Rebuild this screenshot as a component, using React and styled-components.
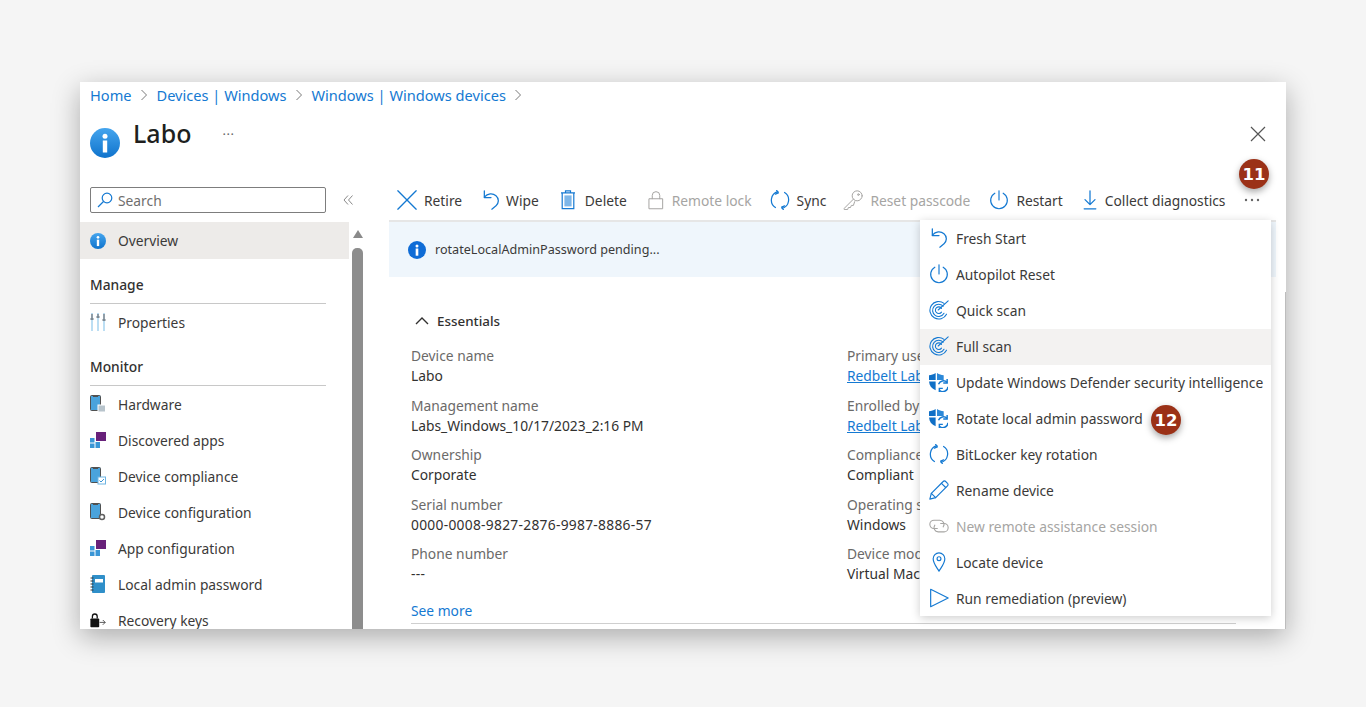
import React from "react";
import styled, { createGlobalStyle } from "styled-components";

const BLUE = "#1479d2";
const GREY = "#a6a5a3";

const GlobalStyle = createGlobalStyle`
  html, body { margin: 0; padding: 0; background: #f5f5f5; }
  body { font-family: "Noto Sans", "Open Sans", Arial, sans-serif; color: #3b3a39; }
`;

const Page = styled.div`
  height: 707px;
  padding: 82px 80px 0;
  box-sizing: border-box;
  overflow: hidden;
`;

const Win = styled.div`
  position: relative;
  width: 1206px;
  height: 547px;
  background: #fff;
  display: flex;
  flex-direction: column;
  box-shadow: 0 8px 26px rgba(0, 0, 0, 0.3);
  &::after {
    content: "";
    position: absolute;
    right: 0;
    top: 210px;
    bottom: 0;
    width: 1px;
    background: #bdbdbd;
  }
`;

const Crumbs = styled.nav`
  height: 28px;
  padding: 0 0 2px 10px;
  box-sizing: border-box;
  display: flex;
  align-items: center;
  gap: 8.5px;
  font-size: 14.6px;
  color: ${BLUE};
  flex-shrink: 0;
`;

const CrumbSep = styled.svg`
  width: 8px;
  height: 12px;
  fill: none;
  stroke: #7a7a7a;
  stroke-width: 1;
`;

const Header = styled.header`
  height: 65px;
  padding: 18px 20px 0 10px;
  box-sizing: border-box;
  display: flex;
  align-items: flex-start;
  flex-shrink: 0;
`;

const Title = styled.h1`
  margin: -13px 0 0 13px;
  font-size: 25px;
  line-height: 36px;
  font-weight: 500;
  color: #201f1e;
`;

const TitleDots = styled.span`
  margin: -8px 0 0 31px;
  font-size: 13px;
  line-height: 20px;
  letter-spacing: 0.5px;
  color: #666;
`;

const CloseBtn = styled.button`
  margin: -2px 0 0 auto;
  padding: 0;
  width: 16px;
  height: 16px;
  border: 0;
  background: none;
  display: flex;
`;

const Body = styled.div`
  flex: 1;
  min-height: 0;
  display: flex;
`;

const Sidebar = styled.aside`
  width: 283px;
  flex-shrink: 0;
  display: flex;
  overflow: hidden;
  position: relative;
`;

const SideCol = styled.div`
  width: 269px;
  flex-shrink: 0;
  padding-top: 12px;
`;

const SearchRow = styled.div`
  display: flex;
  align-items: center;
  padding-left: 10px;
  width: 283px;
`;

const SearchBox = styled.div`
  width: 236px;
  height: 26px;
  box-sizing: border-box;
  border: 1px solid #7d7d7d;
  border-radius: 2px;
  padding-left: 6px;
  display: flex;
  align-items: center;
  gap: 5px;
  font-size: 13.8px;
  color: #6f6e6d;
`;

const Collapse = styled.svg`
  width: 10px;
  height: 10px;
  margin-left: 17px;
  fill: none;
  stroke: #8a8a8a;
  stroke-width: 1;
`;

const NavRow = styled.div`
  height: ${(p) => (p.$active ? 37 : 36)}px;
  margin-top: ${(p) => (p.$active ? 9 : 0)}px;
  padding: 0 0 ${(p) => (p.$active ? 0 : 2)}px 10px;
  box-sizing: border-box;
  display: flex;
  align-items: center;
  gap: 12px;
  font-size: 13.8px;
  white-space: nowrap;
  background: ${(p) => (p.$active ? "#edebe9" : "transparent")};
`;

const NavIcon = styled.span`
  width: 16px;
  height: 18px;
  display: flex;
  align-items: center;
  flex-shrink: 0;
`;

const SectionHead = styled.div`
  height: 45px;
  width: 236px;
  margin: 0 0 1px 10px;
  box-sizing: border-box;
  padding-top: 15px;
  border-bottom: 1px solid #c8c8c8;
  font-size: 13.8px;
  line-height: 22px;
  font-weight: 500;
  color: #323130;
`;

const ScrollTrack = styled.div`
  width: 11px;
  margin-left: 3px;
  padding-top: 55px;
  display: flex;
  flex-direction: column;
  align-items: center;
  gap: 10px;
`;

const ScrollUp = styled.div`
  width: 0;
  height: 0;
  border-left: 5px solid transparent;
  border-right: 5px solid transparent;
  border-bottom: 8px solid #8a8a8a;
`;

const ScrollThumb = styled.div`
  width: 11px;
  flex: 1;
  background: #8d8d8d;
  border-radius: 5px 5px 0 0;
`;

const Main = styled.main`
  position: relative;
  flex: 1;
  min-width: 0;
  overflow: hidden;
`;

const Toolbar = styled.div`
  height: 45px;
  padding: 5px 0 0 34px;
  box-sizing: border-box;
  display: flex;
  align-items: center;
  gap: 18px;
`;

const ToolBtn = styled.div`
  display: flex;
  align-items: center;
  gap: ${(p) => p.$gap || 8}px;
  margin-left: ${(p) => p.$nudge || 0}px;
  font-size: 13.8px;
  white-space: nowrap;
  color: ${(p) => (p.$off ? GREY : "#3b3a39")};
`;

const MoreDots = styled.svg`
  width: 16px;
  height: 4px;
  margin-left: 1px;
  fill: #666;
`;

const Banner = styled.div`
  margin-left: 26px;
  width: 887px;
  height: 57px;
  box-sizing: border-box;
  background: #eff6fc;
  border-top: 2px solid #e6e6e6;
  padding-left: 19px;
  display: flex;
  align-items: center;
  gap: 9px;
  font-size: 12.6px;
`;

const Essentials = styled.section`
  margin-left: 48px;
  width: 825px;
`;

const EssHead = styled.div`
  height: 69px;
  padding: 18px 0 0 4px;
  box-sizing: border-box;
  display: flex;
  align-items: center;
  gap: 8px;
  font-size: 13.4px;
  font-weight: 500;
  color: #323130;
`;

const FieldGrid = styled.div`
  display: grid;
  grid-template-columns: 436px 1fr;
  grid-auto-rows: 49.5px;
`;

const Field = styled.div`
  font-size: 13.8px;
  line-height: 20px;
  white-space: nowrap;
`;

const FieldLabel = styled.div`
  color: #6b6a69;
`;

const FieldValue = styled.div`
  color: #323130;
  letter-spacing: ${(p) => (p.$wide ? "0.28px" : "normal")};
`;

const UserLink = styled.a`
  color: ${BLUE};
  text-decoration: underline;
`;

const SeeMore = styled.a`
  display: block;
  margin-top: 7px;
  font-size: 13.8px;
  line-height: 20px;
  color: ${BLUE};
`;

const EndRule = styled.div`
  margin-top: 2px;
  height: 1px;
  background: #cfcfcf;
`;

const Menu = styled.div`
  position: absolute;
  left: 557px;
  top: 45px;
  width: 351px;
  height: 396px;
  padding-top: 1px;
  box-sizing: border-box;
  background: #fff;
  box-shadow: 0 2px 9px rgba(0, 0, 0, 0.2);
`;

const MenuRow = styled.div`
  height: 36px;
  padding: 0 0 2px 9px;
  box-sizing: border-box;
  display: flex;
  align-items: center;
  gap: 7px;
  font-size: 13.8px;
  white-space: nowrap;
  color: ${(p) => (p.$off ? GREY : "#3b3a39")};
  background: ${(p) => (p.$hover ? "#f3f2f1" : "transparent")};
`;

const MenuIcon = styled.span`
  width: 20px;
  height: 20px;
  display: flex;
  align-items: center;
  flex-shrink: 0;
`;

const Badge = styled.div`
  position: absolute;
  left: ${(p) => p.$x}px;
  top: ${(p) => p.$y}px;
  width: 30px;
  height: 30px;
  border-radius: 50%;
  background: #9b3117;
  color: #fff;
  font-family: "DejaVu Sans", sans-serif;
  font-weight: 700;
  font-size: 16.5px;
  display: flex;
  align-items: center;
  justify-content: center;
  box-shadow: 0 3px 7px rgba(0, 0, 0, 0.35);
`;

const Glyph = ({ size = 20, color = BLUE, sw = 1.4, children }) => (
  <svg width={size} height={size} viewBox="0 0 24 24" fill="none" stroke={color} strokeWidth={sw} strokeLinecap="round" strokeLinejoin="round">
    {children}
  </svg>
);

const InfoBall = ({ size, id, flat }) => (
  <svg width={size} height={size} viewBox="0 0 30 30">
    <defs>
      <linearGradient id={id} x1="0" y1="0" x2="0" y2="1">
        <stop offset="0" stopColor={flat ? "#0f6cd6" : "#45a5ee"} />
        <stop offset="1" stopColor={flat ? "#0f6cd6" : "#0f73cc"} />
      </linearGradient>
    </defs>
    <circle cx="15" cy="15" r="15" fill={`url(#${id})`} />
    <circle cx="15" cy="8.2" r="2.5" fill="#fff" />
    <rect x="12.8" y="12.5" width="4.4" height="12" fill="#fff" />
  </svg>
);

const Retire = () => <Glyph sw={1.6}><path d="M1 1l22 22M23 1L1 23" /></Glyph>;
const Undo = () => (
  <Glyph sw={1.5}>
    <path d="M4 1v8h8" />
    <path d="M4 8.500C8 4 14 3.500 18 7c4 3.600 3.500 8.500 0 12l-5 4" />
  </Glyph>
);
const Trash = () => (
  <svg width="18" height="20" viewBox="0 0 18 20" fill="none" stroke={BLUE} strokeWidth="1.2">
    <path d="M6.500 2.500V.8h5v1.700M2 2.800h14" />
    <path d="M3.200 3v15.600h11.600V3" />
    <rect x="5.400" y="5.400" width="7.200" height="11" fill="#7db6e8" stroke="none" />
  </svg>
);
const Lock = () => (
  <Glyph color={GREY} sw={1.2}>
    <rect x="4" y="10.500" width="16" height="12" />
    <path d="M7.500 10.500V6.500a4.500 4.500 0 0 1 9 0v4" />
  </Glyph>
);
const Sync = () => (
  <Glyph sw={1.5}>
    <path d="M9.500 2A10.500 10.500 0 0 0 6.500 21" />
    <path d="M14.500 22A10.500 10.500 0 0 0 17.500 3" />
    <path d="M8 0.500l2 3-3.500 1.500M16 23.500l-2-3 3.500-1.500" />
  </Glyph>
);
const KeyIcon = () => (
  <Glyph color={GREY} sw={1.2}>
    <circle cx="17" cy="7" r="6" />
    <circle cx="18.500" cy="5.500" r="1" />
    <path d="M12.500 11L1.500 22v1.500h4l1-2.500h2.500l1-2.500h2.500l1.500-4.500" />
  </Glyph>
);
const Power = () => (
  <Glyph sw={1.4}>
    <path d="M12 1v11" />
    <path d="M7 3.800a10 10 0 1 0 10 0" />
  </Glyph>
);
const Download = () => (
  <Glyph sw={1.5}>
    <path d="M12 1v16M6 11.500l6 6 6-6M5 22.500h14" />
  </Glyph>
);
const Scan = () => (
  <Glyph sw={1.3}>
    <path d="M18 4A10.500 10.500 0 1 0 21 17" />
    <path d="M17 7.500A7.300 7.300 0 1 0 18 16" />
    <path d="M15 10A4 4 0 1 0 15 14.500" />
    <path d="M11 12L23 1" />
  </Glyph>
);
const Shield = () => (
  <svg width="19" height="19" viewBox="1 1 22 22">
    <path d="M1 3.500C4 3.500 6 2.500 8.700 1v8.200H1z" fill="#0f6fc6" />
    <path d="M10.300 1C13 2.500 15 3.500 18 3.500v5.700h-7.700z" fill="#2b88d8" />
    <path d="M1 10.800h7.700v10.200C4 19 1.500 16 1 10.800z" fill="#0f6fc6" />
    <path d="M12 14a6 6 0 0 1 10-2M23 17a6 6 0 0 1-10 4" fill="none" stroke={BLUE} strokeWidth="1.700" />
    <path d="M22 8v4.500h-4.500" fill="none" stroke={BLUE} strokeWidth="1.700" />
    <path d="M13 23v-4.200h4" fill="none" stroke={BLUE} strokeWidth="1.700" />
  </svg>
);
const Pencil = () => (
  <Glyph sw={1.4}>
    <path d="M1 23l1.800-7L17 1.800a2 2 0 0 1 3 0l2.200 2.200a2 2 0 0 1 0 3L8 21.200z" />
    <path d="M2.800 16L8 21.200M15 4l5 5" />
  </Glyph>
);
const Chain = () => (
  <Glyph color={GREY} sw={1.3}>
    <path d="M10 15H6a5 5 0 0 1 0-10h7a5 5 0 0 1 4 8" />
    <path d="M14 9h4a5 5 0 0 1 0 10h-7a5 5 0 0 1-4-8" />
  </Glyph>
);
const Pin = () => (
  <Glyph sw={1.4}>
    <path d="M12 23C8 16.500 5 13 5 8a7 7 0 0 1 14 0c0 5-3 8.500-7 15z" />
    <circle cx="12" cy="8" r="2.300" />
  </Glyph>
);
const Play = () => <Glyph sw={1.4}><path d="M2 1.500L23 12 2 22.500z" /></Glyph>;

const SlidersIcon = () => (
  <svg width="16" height="18" viewBox="0 0 16 18" fill="none" strokeWidth="1.800">
    <path d="M2 0v18M8 0v18M14 0v18" stroke="#b5dbf2" />
    <path d="M2 1v4M8 1v2M14 1v5" stroke="#8c97a0" />
    <path d="M0.500 6h3M6.500 4h3M12.500 7h3" stroke="#7d8993" />
  </svg>
);
const PhoneIcon = ({ badge }) => (
  <svg width="16" height="18" viewBox="0 0 16 18">
    <rect x="0.500" y="0.500" width="10" height="15" rx="1" fill="#4aa3dc" stroke="#505050" />
    <rect x="3" y="0" width="5" height="2" fill="#505050" />
    {badge === "chip" && <rect x="8" y="10" width="7.500" height="7" fill="#b8c4cc" stroke="#fff" />}
    {badge === "check" && (
      <g>
        <rect x="8" y="10" width="7.500" height="7" fill="#fff" stroke="#6fb5e3" />
        <path d="M9.500 13.500l1.500 1.500 3-3" fill="none" stroke="#3a96d6" />
      </g>
    )}
    {badge === "gear" && <circle cx="12" cy="14" r="2.500" fill="#fff" stroke="#606060" strokeWidth="1.500" />}
  </svg>
);
const AppsIcon = () => (
  <svg width="16" height="16" viewBox="0 0 16 16">
    <rect x="6" y="0" width="10" height="9" fill="#68217a" />
    <rect x="0" y="6" width="4.500" height="4.500" fill="#3a96d6" />
    <rect x="0" y="11.500" width="4.500" height="4.500" fill="#3a96d6" />
    <rect x="5.500" y="10" width="4.500" height="6" fill="#3a96d6" />
  </svg>
);
const BookIcon = () => (
  <svg width="16" height="18" viewBox="0 0 16 18">
    <rect x="2" y="0" width="13" height="18" rx="1" fill="#2f8fc9" />
    <rect x="5" y="4" width="8" height="3.500" fill="#fff" />
    <path d="M0.500 3h3M0.500 6h3M0.500 9h3M0.500 12h3M0.500 15h3" stroke="#333" />
  </svg>
);
const KeysIcon = () => (
  <svg width="19" height="18" viewBox="0 0 20 18">
    <rect x="0.500" y="7" width="11" height="11" rx="1" fill="#111" />
    <path d="M3 7V4.500a3 3 0 0 1 6 0V7" fill="none" stroke="#111" strokeWidth="1.600" />
    <path d="M12 12h7M16 9l3 3-3 3" fill="none" stroke="#333" />
  </svg>
);

const NAV = [
  { head: "Manage" },
  { label: "Properties", icon: <SlidersIcon /> },
  { head: "Monitor" },
  { label: "Hardware", icon: <PhoneIcon badge="chip" /> },
  { label: "Discovered apps", icon: <AppsIcon /> },
  { label: "Device compliance", icon: <PhoneIcon badge="check" /> },
  { label: "Device configuration", icon: <PhoneIcon badge="gear" /> },
  { label: "App configuration", icon: <AppsIcon /> },
  { label: "Local admin password", icon: <BookIcon /> },
  { label: "Recovery keys", icon: <KeysIcon /> },
];

const TOOLS = [
  { label: "Retire", icon: <Retire />, gap: 7 },
  { label: "Wipe", icon: <Undo />, gap: 5, nudge: 1 },
  { label: "Delete", icon: <Trash />, nudge: 2 },
  { label: "Remote lock", icon: <Lock />, gap: 6, off: true, nudge: 1 },
  { label: "Sync", icon: <Sync />, gap: 7 },
  { label: "Reset passcode", icon: <KeyIcon />, gap: 7, off: true, nudge: -1 },
  { label: "Restart", icon: <Power />, gap: 7, nudge: 1 },
  { label: "Collect diagnostics", icon: <Download />, gap: 5, nudge: -1 },
];

const MENU = [
  { label: "Fresh Start", icon: <Undo /> },
  { label: "Autopilot Reset", icon: <Power /> },
  { label: "Quick scan", icon: <Scan /> },
  { label: "Full scan", icon: <Scan />, hover: true },
  { label: "Update Windows Defender security intelligence", icon: <Shield /> },
  { label: "Rotate local admin password", icon: <Shield /> },
  { label: "BitLocker key rotation", icon: <Sync /> },
  { label: "Rename device", icon: <Pencil /> },
  { label: "New remote assistance session", icon: <Chain />, off: true },
  { label: "Locate device", icon: <Pin /> },
  { label: "Run remediation (preview)", icon: <Play /> },
];

const FIELDS = [
  { a: "Device name", b: "Labo", c: "Primary user", d: "Redbelt Labs", link: true },
  { a: "Management name", b: "Labs_Windows_10/17/2023_2:16 PM", c: "Enrolled by", d: "Redbelt Labs", link: true },
  { a: "Ownership", b: "Corporate", c: "Compliance", d: "Compliant" },
  { a: "Serial number", b: "0000-0008-9827-2876-9987-8886-57", c: "Operating system", d: "Windows", wide: true },
  { a: "Phone number", b: "---", c: "Device model", d: "Virtual Machine", wide: true },
];

const Sep = () => (
  <CrumbSep viewBox="0 0 8 12"><path d="M1.500 1l5 5-5 5" /></CrumbSep>
);

export default function App() {
  return (
    <Page>
      <GlobalStyle />
      <Win>
        <Crumbs>
          <span>Home</span><Sep />
          <span>Devices | Windows</span><Sep />
          <span>Windows | Windows devices</span><Sep />
        </Crumbs>
        <Header>
          <InfoBall size={30} id="ball-big" />
          <Title>Labo</Title>
          <TitleDots>...</TitleDots>
          <CloseBtn aria-label="Close">
            <svg width="16" height="16" viewBox="0 0 16 16" stroke="#555" strokeWidth="1.200">
              <path d="M1 1l14 14M15 1L1 15" />
            </svg>
          </CloseBtn>
        </Header>
        <Body>
          <Sidebar>
            <SideCol>
              <SearchRow>
                <SearchBox>
                  <svg width="16" height="16" viewBox="0 0 16 16" fill="none" stroke={BLUE} strokeWidth="1.200">
                    <circle cx="10" cy="6" r="4.800" />
                    <path d="M6.500 9.500L1 15" />
                  </svg>
                  Search
                </SearchBox>
                <Collapse viewBox="0 0 10 10"><path d="M5 0.500L1 5l4 4.500M9.500 0.500L5.500 5l4 4.500" /></Collapse>
              </SearchRow>
              <NavRow $active>
                <NavIcon><InfoBall size={16} id="ball-nav" /></NavIcon>
                Overview
              </NavRow>
              {NAV.map((n) =>
                n.head ? (
                  <SectionHead key={n.head}>{n.head}</SectionHead>
                ) : (
                  <NavRow key={n.label}>
                    <NavIcon>{n.icon}</NavIcon>
                    {n.label}
                  </NavRow>
                )
              )}
            </SideCol>
            <ScrollTrack>
              <ScrollUp />
              <ScrollThumb />
            </ScrollTrack>
          </Sidebar>
          <Main>
            <Toolbar>
              {TOOLS.map((t) => (
                <ToolBtn key={t.label} $off={t.off} $gap={t.gap} $nudge={t.nudge}>
                  {t.icon}
                  {t.label}
                </ToolBtn>
              ))}
              <MoreDots viewBox="0 0 16 4">
                <circle cx="2" cy="2" r="1.200" />
                <circle cx="8" cy="2" r="1.200" />
                <circle cx="14" cy="2" r="1.200" />
              </MoreDots>
            </Toolbar>
            <Banner>
              <InfoBall size={18} id="ball-note" flat />
              rotateLocalAdminPassword pending...
            </Banner>
            <Essentials>
              <EssHead>
                <svg width="14" height="8" viewBox="0 0 14 8" fill="none" stroke="#323130" strokeWidth="1.400">
                  <path d="M1 7l6-6 6 6" />
                </svg>
                Essentials
              </EssHead>
              <FieldGrid>
                {FIELDS.map((f) => (
                  <React.Fragment key={f.a}>
                    <Field>
                      <FieldLabel>{f.a}</FieldLabel>
                      <FieldValue $wide={f.wide}>{f.b}</FieldValue>
                    </Field>
                    <Field>
                      <FieldLabel>{f.c}</FieldLabel>
                      <FieldValue>{f.link ? <UserLink>{f.d}</UserLink> : f.d}</FieldValue>
                    </Field>
                  </React.Fragment>
                ))}
              </FieldGrid>
              <SeeMore>See more</SeeMore>
              <EndRule />
            </Essentials>
            <Menu>
              {MENU.map((m) => (
                <MenuRow key={m.label} $off={m.off} $hover={m.hover}>
                  <MenuIcon>{m.icon}</MenuIcon>
                  {m.label}
                </MenuRow>
              ))}
            </Menu>
          </Main>
        </Body>
        <Badge $x={1159} $y={77}>11</Badge>
        <Badge $x={1071} $y={323}>12</Badge>
      </Win>
    </Page>
  );
}
